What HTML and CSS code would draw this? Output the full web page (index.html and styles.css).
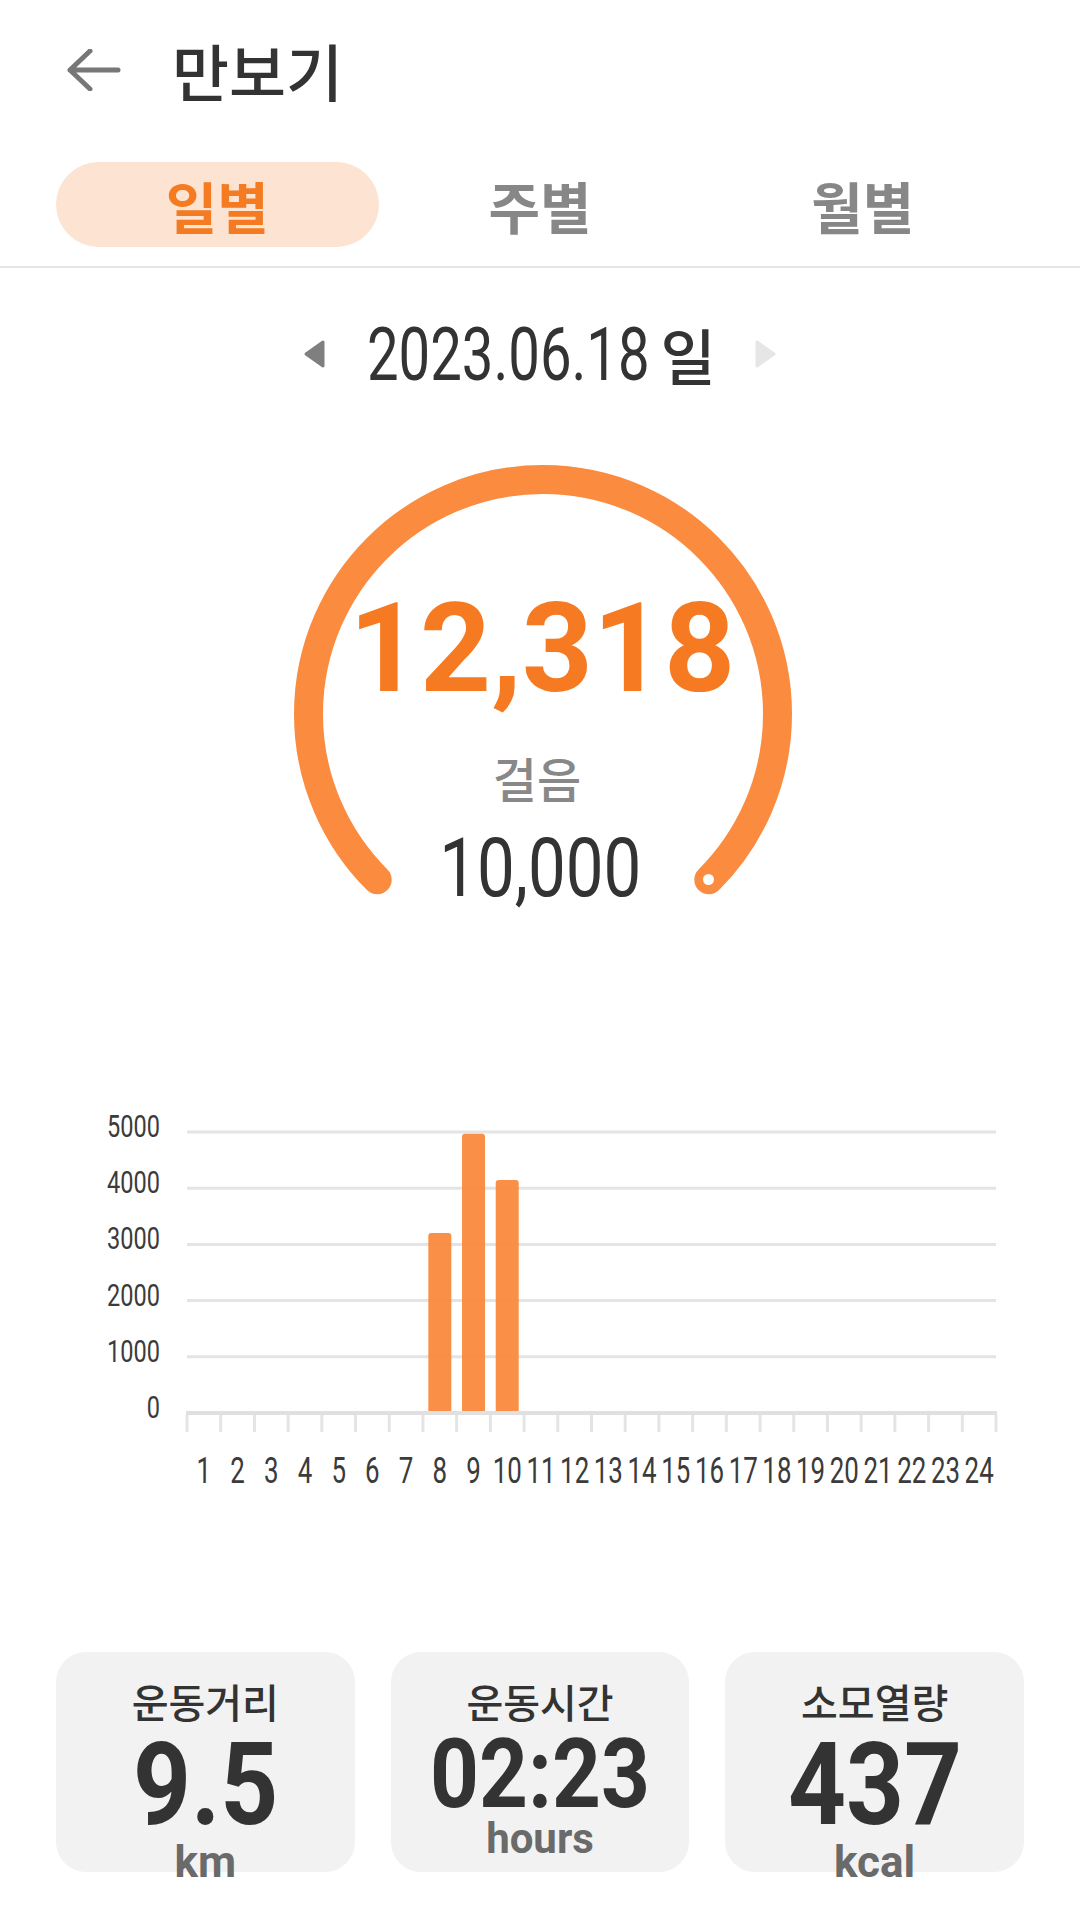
FILE: index.html
```html
<!DOCTYPE html>
<html lang="ko">
<head>
  <meta charset="UTF-8" />
  <title>만보기</title>
  <link rel="stylesheet" href="styles.css">
</head>
<body>

  <header class="top-bar">
    <svg class="back" viewBox="0 0 56 42" width="56" height="42">
      <path d="M4 21H52M24 2L4 21l20 19" />
    </svg>
    <h1>만보기</h1>
  </header>

  <nav class="tabs">
    <div class="tab active">일별</div>
    <div class="tab">주별</div>
    <div class="tab">월별</div>
  </nav>

  <div class="date-nav">
    <svg class="tri prev" viewBox="0 0 24 30" width="24" height="30"><path d="M20 3L3 15l17 12z" /></svg>
    <div class="date">
      <span class="date-num">2023.06.18</span>
      <span class="date-day">일</span>
    </div>
    <svg class="tri next" viewBox="0 0 24 30" width="24" height="30"><path d="M4 3l17 12L4 27z" /></svg>
  </div>

  <section class="gauge">
    <svg class="ring" viewBox="0 0 1080 650" width="1080" height="650">
      <path d="M377.2 439.8A234.5 234.5 0 1 1 708.8 439.8" />
      <circle cx="708.5" cy="439.5" r="5.5" />
    </svg>
    <div class="steps">12,318</div>
    <div class="steps-unit">걸음</div>
    <div class="goal"><span>10,000</span></div>
  </section>

  <section class="hourly">
    <svg id="chart" viewBox="0 0 1080 430" width="1080" height="430"></svg>
  </section>

  <section class="stats">
    <div class="card">
      <div class="card-label">운동거리</div>
      <div class="card-value"><span>9.5</span></div>
      <div class="card-unit">km</div>
    </div>
    <div class="card small">
      <div class="card-label">운동시간</div>
      <div class="card-value"><span>02:23</span></div>
      <div class="card-unit">hours</div>
    </div>
    <div class="card">
      <div class="card-label">소모열량</div>
      <div class="card-value"><span>437</span></div>
      <div class="card-unit">kcal</div>
    </div>
  </section>

  <script>
    const NS = 'http://www.w3.org/2000/svg';
    const chart = document.getElementById('chart');
    const hourly = { 8: 3204, 9: 4968, 10: 4146 };

    const left = 187, right = 996, base = 323, step = 56.2;
    const slot = (right - left) / 24;

    function add(tag, attrs, text) {
      const el = document.createElementNS(NS, tag);
      for (const k in attrs) el.setAttribute(k, attrs[k]);
      if (text !== undefined) el.textContent = text;
      chart.appendChild(el);
      return el;
    }

    // grid + y axis
    for (let i = 0; i <= 5; i++) {
      const y = base - i * step;
      if (i > 0) add('line', { x1: left, x2: right, y1: y, y2: y, class: 'grid' });
      add('text', { class: 'y-label', transform: `translate(160 ${y + 5}) scale(0.76 1)` }, i * 1000);
    }

    // bars
    for (let h = 1; h <= 24; h++) {
      const v = hourly[h] || 0;
      if (!v) continue;
      const hgt = v * step / 1000;
      const cx = left + (h - 0.5) * slot;
      add('rect', { class: 'bar', x: cx - 11.5, y: base - hgt, width: 23, height: hgt + 2, rx: 3 });
    }

    // baseline + ticks
    add('line', { x1: left - 1, x2: right + 1, y1: base, y2: base, class: 'axis' });
    for (let t = 0; t <= 24; t++) {
      const x = left + t * slot;
      add('line', { x1: x, x2: x, y1: base + 2, y2: base + 19, class: 'tick' });
    }

    // hour labels
    for (let h = 1; h <= 24; h++) {
      const cx = left + (h - 0.5) * slot;
      add('text', { class: 'x-label', transform: `translate(${cx} 393) scale(0.7 1)` }, h);
    }
  </script>

</body>
</html>
```

FILE: styles.css
```css
body {
  margin: 0;
  width: 1080px;
  height: 1912px;
  overflow: hidden;
  background: #ffffff;
  color: #333333;
  font-family: "Noto Sans CJK KR", Roboto, sans-serif;
}

.top-bar {
  height: 140px;
  display: flex;
  align-items: center;
  padding-left: 66px;
}

.back path {
  fill: none;
  stroke: #777777;
  stroke-width: 5;
  stroke-linecap: round;
  stroke-linejoin: round;
}

.top-bar h1 {
  margin: 0 0 0 50px;
  font-size: 62px;
  line-height: 62px;
  font-weight: 500;
  color: #333333;
}

.tabs {
  margin-top: 22px;
  padding: 0 56px 19px;
  display: grid;
  grid-template-columns: repeat(3, 1fr);
  border-bottom: 2px solid #e6e6e6;
}

.tab {
  height: 85px;
  line-height: 85px;
  border-radius: 43px;
  text-align: center;
  font-size: 56px;
  font-weight: 700;
  color: #878787;
}

.tab.active {
  background: #fde4d2;
  color: #f47b22;
}

.date-nav {
  height: 172px;
  display: flex;
  align-items: center;
  justify-content: center;
}

.tri path {
  stroke-linejoin: round;
  stroke-width: 3;
}

.tri.prev path { fill: #7f7f7f; stroke: #7f7f7f; }
.tri.next path { fill: #e6e6e6; stroke: #e6e6e6; }

.date {
  display: flex;
  align-items: center;
  margin: 0 37px 0 40px;
  height: 80px;
}

.date-num {
  display: inline-block;
  width: 277px;
  white-space: nowrap;
  font-family: Roboto, sans-serif;
  font-size: 75px;
  line-height: 80px;
  color: #333333;
  transform: scaleX(0.75);
  transform-origin: 0 0;
}

.date-day {
  margin-left: 16px;
  font-size: 60px;
  line-height: 80px;
  font-weight: 500;
  color: #333333;
}

.gauge {
  position: relative;
  height: 650px;
  padding-top: 147px;
  box-sizing: border-box;
  text-align: center;
}

.ring {
  position: absolute;
  left: 0;
  top: 0;
}

.ring path {
  fill: none;
  stroke: #fb8b3f;
  stroke-width: 29;
  stroke-linecap: round;
}

.ring circle {
  fill: #ffffff;
}

.steps {
  position: relative;
  font-family: Roboto, sans-serif;
  font-weight: 700;
  font-size: 124px;
  line-height: 124px;
  color: #f57a22;
  margin-left: 4px;
}

.steps-unit {
  position: relative;
  margin-top: 42px;
  font-size: 48px;
  line-height: 48px;
  font-weight: 500;
  color: #888888;
  margin-right: 6px;
}

.goal {
  position: relative;
  margin-top: 26px;
  font-family: Roboto, sans-serif;
  font-size: 82px;
  line-height: 82px;
  color: #333333;
}

.goal span {
  display: inline-block;
  transform: scaleX(0.82);
}

.hourly {
  height: 430px;
}

#chart {
  display: block;
}

.grid {
  stroke: #e4e4e4;
  stroke-width: 3;
}

.axis {
  stroke: #e0e0e0;
  stroke-width: 4;
}

.tick {
  stroke: #e4e4e4;
  stroke-width: 3;
}

.bar {
  fill: #fa8a3e;
  opacity: 0.95;
}

.y-label,
.x-label {
  font-family: Roboto, sans-serif;
  fill: #3b3b3b;
}

.y-label {
  font-size: 31px;
  text-anchor: end;
}

.x-label {
  font-size: 37px;
  text-anchor: middle;
}

.stats {
  margin-top: 132px;
  padding: 0 56px;
  display: grid;
  grid-template-columns: repeat(3, 1fr);
  gap: 36px;
}

.card {
  height: 220px;
  box-sizing: border-box;
  padding-top: 29px;
  border-radius: 30px;
  background: #f2f2f2;
  text-align: center;
}

.card-label {
  font-size: 40px;
  line-height: 40px;
  font-weight: 500;
  color: #333333;
}

.card-value {
  margin-top: 14px;
  font-family: Roboto, sans-serif;
  font-weight: 700;
  font-size: 115px;
  line-height: 100px;
  color: #333333;
}

.card-value span {
  display: inline-block;
  transform: scaleX(0.88);
}

.card-unit {
  margin-top: 5px;
  font-family: Roboto, sans-serif;
  font-weight: 700;
  font-size: 44px;
  line-height: 44px;
  color: #6a6a6a;
}

.card.small .card-value {
  margin-top: 11px;
  font-size: 97px;
  line-height: 84px;
}

.card.small .card-unit {
  margin-top: 2px;
  font-size: 42px;
  line-height: 42px;
}
```
